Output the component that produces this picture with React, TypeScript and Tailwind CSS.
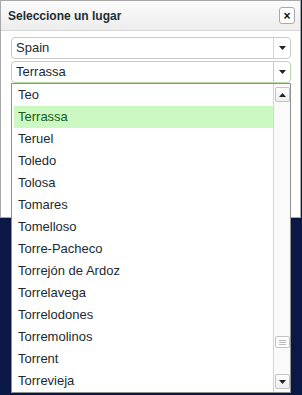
import React from 'react';

const cities = [
    'Teo', 'Terrassa', 'Teruel', 'Toledo', 'Tolosa', 'Tomares', 'Tomelloso',
    'Torre-Pacheco', 'Torrejón de Ardoz', 'Torrelavega', 'Torrelodones',
    'Torremolinos', 'Torrent', 'Torrevieja',
];

const Arrow = ({ up = false }: { up?: boolean }) => (
    <svg width="7" height="4" viewBox="0 0 7 4" className="block">
        {up ? <path d="M0 4 L3.5 0 L7 4 Z" fill="#222" /> : <path d="M0 0 L7 0 L3.5 4 Z" fill="#222" />}
    </svg>
);

const Select = ({ value, focused = false }: { value: string; focused?: boolean }) => (
    <div className={`flex h-[22px] rounded-[4px] border bg-white ${focused ? 'border-[#b9d9a8]' : 'border-[#c8c8c8]'}`}>
        <div className="flex-1 px-[4px] leading-[20px] text-[13px] text-[#1b2a33]">{value}</div>
        <div className={`w-[17px] flex items-center justify-center border-l ${focused ? 'border-[#b9d9a8]' : 'border-[#d8d8d8]'}`}>
            <Arrow />
        </div>
    </div>
);

const ScrollButton = ({ up = false }: { up?: boolean }) => (
    <div className="h-[15px] w-[15px] flex items-center justify-center rounded-[2px] border border-[#c4c4c4] bg-gradient-to-b from-white to-[#eeeeee]">
        <Arrow up={up} />
    </div>
);

export default function App() {
    return (
        <div className="relative h-[395px] w-[302px] overflow-hidden bg-[#0b1744] font-['Liberation_Sans',Arial,sans-serif]">
            {/* Dialog */}
            <div className="w-[301px] h-[218px] border border-[#a8a8a8] bg-white flex flex-col">
                <div className="h-[30px] flex items-center justify-between pl-[7px] pr-[5px] border-b border-[#d6d6d6] bg-gradient-to-b from-[#fbfbfb] to-[#ededed]">
                    <span className="text-[12px] font-bold text-[#1c2e36]">Seleccione un lugar</span>
                    <button className="h-[17px] w-[16px] flex items-center justify-center rounded-[3px] border border-[#a9a9a9] bg-white text-[12px] font-bold leading-none text-[#111]">
                        ×
                    </button>
                </div>
                <div className="flex flex-col gap-[2px] pt-[6px] pl-[10px] pr-[9px]">
                    <Select value="Spain" />
                    <Select value="Terrassa" focused />
                </div>
            </div>

            {/* Dropdown list */}
            <div className="absolute left-[11px] top-[83px] w-[280px] h-[310px] border border-[#8f8f8f] bg-white flex">
                <div className="flex-1 pl-[2px] pt-[0px]">
                    {cities.map((c) => (
                        <div
                            key={c}
                            className={`h-[22px] leading-[22px] pl-[4px] text-[13px] ${c === 'Terrassa' ? 'bg-[#ccf8c1] text-[#175c1f]' : 'text-[#1b2a33]'}`}
                        >
                            {c}
                        </div>
                    ))}
                </div>
                <div className="w-[17px] border-l border-[#d4d4d4] bg-[#fafafa] flex flex-col items-center justify-between py-[3px]">
                    <ScrollButton up />
                    <div className="flex-1 w-full flex flex-col items-center justify-end pb-[26px]">
                        <div className="h-[12px] w-[15px] rounded-[2px] border border-[#c4c4c4] bg-white flex flex-col items-center justify-center gap-[1px]">
                            <div className="h-px w-[7px] bg-[#bbb]" />
                            <div className="h-px w-[7px] bg-[#bbb]" />
                            <div className="h-px w-[7px] bg-[#bbb]" />
                        </div>
                    </div>
                    <ScrollButton />
                </div>
            </div>
        </div>
    );
}
